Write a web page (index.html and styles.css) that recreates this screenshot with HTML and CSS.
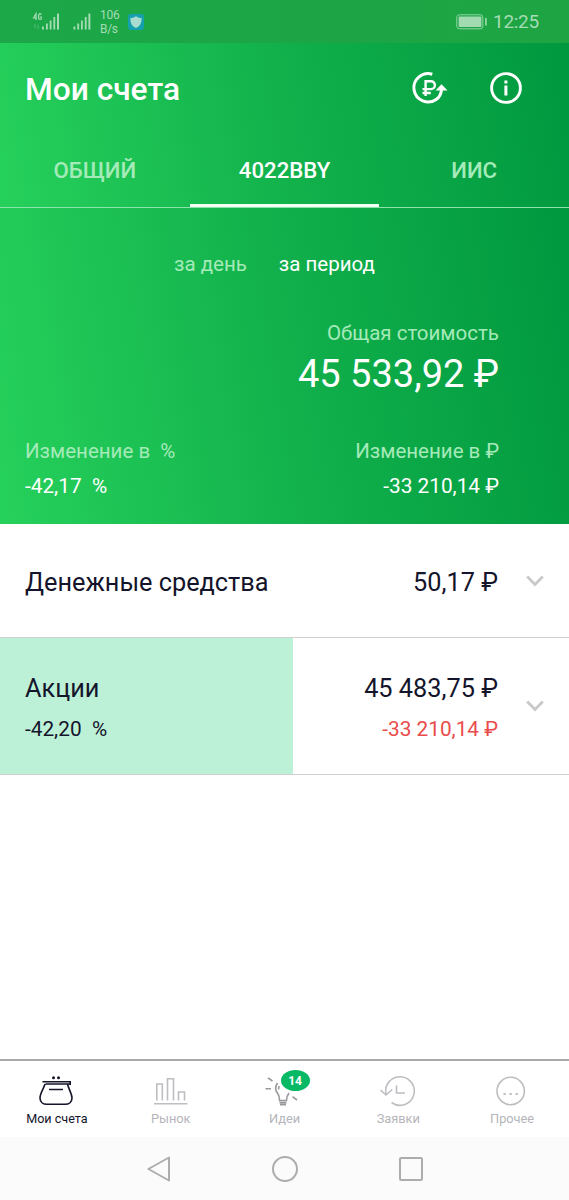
FILE: index.html
```
<!DOCTYPE html>
<html lang="ru">
<head>
<meta charset="utf-8">
<title>Мои счета</title>
<link rel="stylesheet" href="styles.css">
</head>
<body>
<div class="app">
  <div class="status">
    <svg class="signal" width="100" height="43" viewBox="0 0 100 43">
      <g fill="none" stroke="#a5dcb5" stroke-width="1.2">
        <path d="M36 20V13.800L33.500 18H37M41.300 14.800C41 13.900 40.600 13.700 40 13.700C39 13.700 38.500 14.500 38.500 16.800C38.500 19 39 19.500 40 19.500C40.800 19.500 41.300 19.200 41.300 18.700V17H39.800"/>
        <path d="M35 24.500V28.500M34 25.500L35 24.500M38 24.500V28.500L39 27.500" stroke="#5fc27d" stroke-width=".8"/>
      </g>
      <path fill="#a5dcb5" d="M42 26.500h1.800v3H42zM46 23.500h1.800v6H46zM49.700 20.500h1.800v9h-1.800zM53.400 17h1.800v12.500h-1.800zM57 13.500h2v16h-2zM73.500 26.500h1.800v3h-1.800zM77.300 23.500h1.800v6h-1.800zM81 20.500h1.800v9H81zM84.800 17h1.800v12.500h-1.800zM88.400 13.500h2v16h-2z"/>
    </svg>
    <div class="speed"><span>106</span><span>B/s</span></div>
    <svg class="shield" width="16" height="16" viewBox="0 0 16 16">
      <rect width="16" height="16" rx="3" fill="#169fac"/>
      <path d="M8 2.200C10 3.600 11.800 4 13.600 4C13.800 9 12 12.300 8 14C4 12.300 2.200 9 2.400 4C4.200 4 6 3.600 8 2.200Z" fill="#a8dcd0"/>
    </svg>
    <svg class="battery" width="32" height="16" viewBox="0 0 32 16">
      <rect x=".8" y=".8" width="26" height="14" rx="2.500" fill="none" stroke="#8fd6a5" stroke-width="1"/>
      <rect x="2.600" y="2.600" width="22.800" height="10.400" rx=".8" fill="#a2dbb2"/>
      <path d="M29 4h1.800v7.500H29z" fill="#8fd6a5"/>
    </svg>
    <span class="clock">12:25</span>
  </div>

  <header class="hero">
    <div class="titlebar">
      <h1 class="title">Мои счета</h1>
      <svg class="action-rub" width="38" height="36" viewBox="0 0 38 36" fill="none" stroke="#fff">
        <path d="M22.300 4.200A14.200 14.200 0 1 0 26.500 29.200C29.300 27.200 31 24.300 31.500 20" stroke-width="3"/>
        <path d="M25.500 20.500L31.500 14.200L37.500 20.500Z" fill="#fff" stroke="none"/>
        <path d="M15.600 26V11.300H21A3.900 3.900 0 0 1 21 19.100H12.500M12.500 23H20.800" stroke-width="2.400"/>
      </svg>
      <svg class="action-info" width="34" height="34" viewBox="0 0 34 34">
        <circle cx="17" cy="17" r="14.400" fill="none" stroke="#fff" stroke-width="2.900"/>
        <path d="M15.400 9.500h3v3h-3zM15.400 14.500h3v10h-3z" fill="#fff"/>
      </svg>
    </div>
    <nav class="tabs">
      <span class="tab">ОБЩИЙ</span>
      <span class="tab tab-active">4022BBY</span>
      <span class="tab">ИИС</span>
    </nav>
  </header>
  <section class="summary">
    <div class="range">
      <span class="muted">за день</span>
      <span class="chosen">за период</span>
    </div>
    <div class="total">
      <span class="total-label muted">Общая стоимость</span>
      <span class="total-value">45 533,92 ₽</span>
    </div>
    <div class="changes">
      <div class="change">
        <span class="muted">Изменение в&nbsp; %</span>
        <span class="amount">-42,17&nbsp; %</span>
      </div>
      <div class="change change-right">
        <span class="muted">Изменение в ₽</span>
        <span class="amount">-33 210,14 ₽</span>
      </div>
    </div>
  </section>

  <main class="assets">
    <section class="asset cash">
      <span class="name">Денежные средства</span>
      <span class="sum">50,17 ₽</span>
      <svg class="chevron" width="20" height="14" viewBox="0 0 20 14"><path d="M2.200 2.500L10 10.500L17.800 2.500"/></svg>
    </section>
    <section class="asset stocks">
      <div class="col">
        <span class="name">Акции</span>
        <span class="sub amount">-42,20&nbsp; %</span>
      </div>
      <div class="col col-right">
        <span class="sum">45 483,75 ₽</span>
        <span class="sub amount loss">-33 210,14 ₽</span>
      </div>
      <svg class="chevron" width="20" height="14" viewBox="0 0 20 14"><path d="M2.200 2.500L10 10.500L17.800 2.500"/></svg>
    </section>
  </main>

  <nav class="bottom">
    <div class="item item-active">
      <svg width="40" height="34" viewBox="0 0 40 34">
        <circle cx="16.500" cy="3.700" r="1.500" fill="#14142b" stroke="none"/><circle cx="21.500" cy="3.700" r="1.500" fill="#14142b" stroke="none"/>
        <path d="M5.500 7.700H33.500M8.500 10H32.500M33.200 7V11M8 10C6.500 15 3 19.500 3 24C3 28 6 30.300 10 30.300H28C32 30.300 35 28 35 24C35 19.500 31.500 15 30.500 10M12 15.500H26"/>
      </svg>
      <span>Мои счета</span>
    </div>
    <div class="item">
      <svg width="40" height="34" viewBox="0 0 40 34">
        <path d="M5.800 26.500V10H11.300V26.500M16.500 26.500V4.700H22.500V26.500M27.500 26.500V18H33.500V26.500M3 29.700H36.500"/>
      </svg>
      <span>Рынок</span>
    </div>
    <div class="item idea">
      <svg width="40" height="34" viewBox="0 0 40 34">
        <path d="M1.500 14.700H7M4 3.800L8.500 7M28.500 22.700L33 26M13.500 9C10.500 13.500 11.500 17 14 20C15.500 22 15.500 23.500 15.500 26.500H22.500C22.500 23.500 23 21.500 25 19M15.500 28.600H22.500M16 30.600H22M15 12L14.500 15.500"/>
      </svg>
      <span>Идеи</span>
      <b class="badge">14</b>
    </div>
    <div class="item">
      <svg width="40" height="34" viewBox="0 0 40 34">
        <path d="M8 20A14.300 14.300 0 1 1 13.500 28.500M2.500 16L8 21L14.300 15.500M18.500 11.500V19H27"/>
      </svg>
      <span>Заявки</span>
    </div>
    <div class="item">
      <svg width="40" height="34" viewBox="0 0 40 34">
        <circle cx="18.700" cy="17" r="13.700"/>
        <path d="M11.500 20h2.300M17.500 20h2.300M23.500 20h2.300" stroke-width="2.200"/>
      </svg>
      <span>Прочее</span>
    </div>
  </nav>
  <div class="system">
    <svg width="28" height="28" viewBox="0 0 28 28"><path d="M3.400 14L24 2.500V25.500Z"/></svg>
    <svg width="28" height="28" viewBox="0 0 28 28"><circle cx="14" cy="14" r="12"/></svg>
    <svg width="28" height="28" viewBox="0 0 28 28"><rect x="3" y="3" width="22" height="22" rx="1"/></svg>
  </div>
</div>
</body>
</html>
```
FILE: styles.css
```
* { box-sizing: border-box; }
body {
  margin: 0;
  font-family: Roboto, sans-serif;
  color: #14142b;
  background: #fff;
}
svg { display: block; flex: none; }
span { white-space: nowrap; }
.app {
  width: 569px;
  height: 1200px;
  display: flex;
  flex-direction: column;
}
.status {
  height: 43px;
  display: flex;
  align-items: center;
  background: linear-gradient(90deg, #1ca748, #1ea443);
  color: #a5dcb5;
}
.speed {
  display: flex;
  flex-direction: column;
  width: 28px;
  font-size: 12px;
  line-height: 14px;
  letter-spacing: -0.3px;
}
.shield { margin-top: 1px; }
.battery { margin-left: auto; }
.clock {
  width: 81px;
  padding-left: 5px;
  font-size: 19px;
  line-height: 24px;
  letter-spacing: -0.3px;
}
.hero {
  height: 165px;
  color: #fff;
  background: linear-gradient(80deg, #26d15b 0%, #12b14c 50%, #00983f 100%);
}
.titlebar {
  height: 92px;
  display: flex;
  align-items: center;
  padding-left: 25px;
}
.title {
  margin: 2px auto 0 0;
  font-size: 31.7px;
  font-weight: 500;
  line-height: 36px;
}
.action-rub { margin: 0 41px 3px 0; }
.action-info { margin: 0 46px 2px 0; }
.tabs {
  height: 73px;
  display: flex;
  border-bottom: 1px solid #8ee3ab;
}
.tab {
  flex: 1;
  height: 72px;
  text-align: center;
  font-size: 22.2px;
  font-weight: 500;
  line-height: 71px;
  color: #a4ebb9;
}
.tab-active {
  color: #fff;
  border-bottom: 3px solid #f2fff5;
}
.summary {
  height: 316px;
  color: #fff;
  background: linear-gradient(80deg, #26d15b 0%, #12b14c 50%, #00983f 100%);
  font-size: 20.5px;
}
.muted { color: #a5eab9; }
.range {
  display: flex;
  gap: 32px;
  padding: 44px 0 0 174px;
  line-height: 24px;
}
.total {
  display: flex;
  flex-direction: column;
  align-items: flex-end;
  padding: 45px 70px 0 0;
}
.total-label { line-height: 24px; }
.total-value { font-size: 38px; line-height: 58px; }
.changes {
  display: flex;
  justify-content: space-between;
  padding: 36px 70px 0 25px;
}
.change {
  display: flex;
  flex-direction: column;
  gap: 11px;
  line-height: 24px;
}
.change-right { align-items: flex-end; }
.assets { flex: 1; }
.asset {
  display: flex;
  align-items: center;
  padding: 0 24px 0 25px;
  border-bottom: 1px solid #d0d0d0;
}
.cash { height: 114px; }
.cash .name, .cash .sum { padding-top: 4px; }
.stocks {
  height: 137px;
  background: linear-gradient(90deg, #bdf1d7 293px, #fff 293px);
}
.name, .sum { font-size: 25.3px; line-height: 32px; }
.sum { margin-left: auto; }
.sub { line-height: 24px; }
.amount { font-size: 20.8px; }
.col {
  display: flex;
  flex-direction: column;
  gap: 12px;
  padding-top: 1px;
}
.col-right { margin-left: auto; align-items: flex-end; }
.loss { color: #ea4b4b; }
.chevron {
  margin-left: 27px;
  fill: none;
  stroke: #c9c9cb;
  stroke-width: 2.8;
}
.bottom {
  height: 78px;
  display: flex;
  border-top: 2px solid #a9a9a9;
}
.item {
  flex: 1;
  position: relative;
  display: flex;
  flex-direction: column;
  align-items: center;
  padding-top: 13px;
  font-size: 12.8px;
  line-height: 16px;
  color: #b5b5bb;
}
.item svg {
  fill: none;
  stroke: #bdbdc2;
  stroke-width: 1.6;
}
.item span { margin-top: 3px; }
.item-active {
  color: #14142b;
  font-size: 12.6px;
}
.item-active svg { stroke: #14142b; }
.idea svg { stroke: #99999e; }
.badge {
  position: absolute;
  left: 53px;
  top: 9px;
  width: 29px;
  height: 21px;
  border-radius: 50%;
  background: #07b965;
  color: #fff;
  font-size: 12px;
  line-height: 22px;
  text-align: center;
}
.system {
  height: 63px;
  display: flex;
  align-items: center;
  justify-content: center;
  gap: 98px;
  background: #fbfbfb;
}
.system svg {
  fill: none;
  stroke: #adadad;
  stroke-width: 2;
  stroke-linejoin: round;
}
```
